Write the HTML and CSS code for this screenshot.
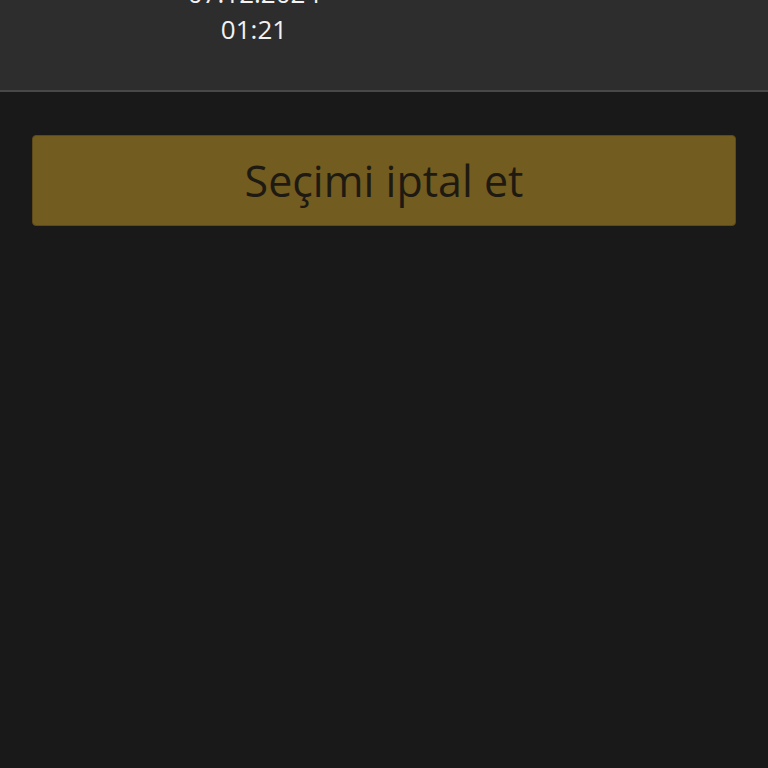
FILE: index.html
```html
<!DOCTYPE html>
<html lang="tr">
<head>
<meta charset="utf-8">
<link rel="stylesheet" href="styles.css">
</head>
<body>
  <header class="topbar">
    <div class="datetime">
      <div class="date">07.12.2024</div>
      <div class="time">01:21</div>
    </div>
  </header>
  <main class="content">
    <button class="cancel-btn" type="button">Seçimi iptal et</button>
  </main>
</body>
</html>
```
FILE: styles.css
```css
html, body {
  margin: 0;
  padding: 0;
  height: 100%;
  background: #191919;
  font-family: "Open Sans", "Noto Sans", sans-serif;
  overflow: hidden;
}

.topbar {
  height: 90px;
  background: #2d2d2d;
  border-bottom: 2px solid #484848;
  box-sizing: content-box;
  overflow: hidden;
}

.datetime {
  width: 508px;
  margin-top: -25px;
  text-align: center;
  color: #f2f2f2;
  font-size: 26px;
  line-height: 36px;
}

.content {
  padding: 43px 32px 0;
}

.cancel-btn {
  display: flex;
  align-items: center;
  justify-content: center;
  width: 100%;
  height: 91px;
  margin: 0;
  padding: 0;
  border: 1px solid #5e4a18;
  border-radius: 4px;
  background: #735c20;
  color: #1e1a12;
  font-family: "Open Sans", "Noto Sans", sans-serif;
  font-size: 43px;
}
```
